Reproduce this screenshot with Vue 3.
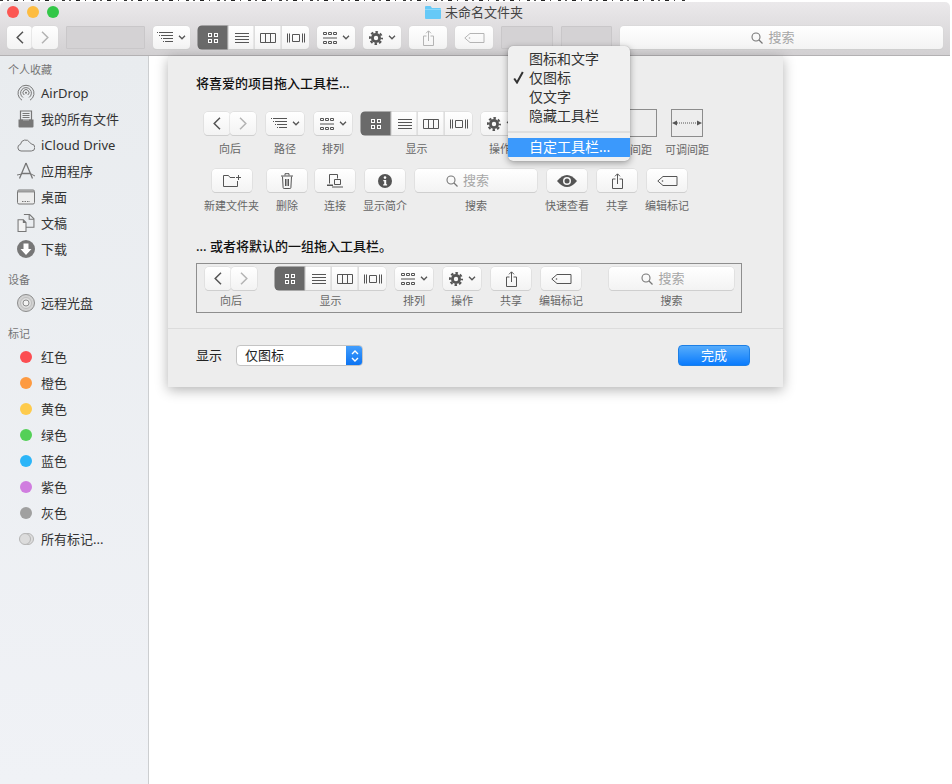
<script setup>
const I = (n, w, h) => ({ n, w, h })
const btn = (cls, ...icons) => ({ cls, icons })

const nav = (a, b) => ({
  cls: 'nav',
  segs: [btn(a, I('cl', 8, 13)), btn(b + ' off', I('cr', 8, 13))],
})
const view = () => ({
  cls: 'joined',
  segs: [
    btn('b30 on', I('grid', 10, 10)),
    btn('b26', I('lines', 14, 10)),
    btn('b27', I('cols', 16, 10)),
    btn('b28', I('cover', 18, 10)),
  ],
})
const single = (b, ...icons) => ({ cls: '', segs: [btn(b, ...icons)] })
const path = (b) => single(b, I('path', 16, 11), I('caret', 8, 5))
const arrange = (b) => single(b, I('arr', 14, 12), I('caret', 8, 5))
const action = (b) => single(b, I('gear', 14, 14), I('caret', 8, 5))
const share = (b = 'b40') => single(b, I('share', 11, 16))
const tag = (b = 'b40') => single(b, I('tag', 21, 10))
const search = (b) => ({
  cls: '',
  segs: [{ cls: b + ' search', icons: [I('search', 12, 12)], text: '搜索' }],
})

const toolbar = [
  nav('b25', 'b26'),
  single('ph b79'),
  path('b37'),
  view(),
  arrange('b38'),
  action('b38'),
  share('b38 off'),
  tag('b38 off'),
  single('ph b52'),
  single('ph b51'),
  search('b323'),
]

const rowOne = [
  { label: '向后', w: 'w52 mr1', ...nav('b26', 'b26') },
  { label: '路径', w: 'w40', ...path('b38') },
  { label: '排列', w: 'w40', ...arrange('b38') },
  { label: '显示', w: 'w111', ...view() },
  { label: '操作', w: 'w40', ...action('b38') },
  { label: '固定间距', w: 'w54 far', space: 'fixed' },
  { label: '可调间距', w: 'w44', space: 'flex' },
]
const rowTwo = [
  { label: '新建文件夹', w: 'w55', ...single('b40', I('newf', 18, 13)) },
  { label: '删除', w: 'w40', ...single('b40', I('trash', 12, 16)) },
  { label: '连接', w: 'w40', ...single('b40', I('conn', 16, 14)) },
  { label: '显示简介', w: 'w44', ...single('b40', I('info', 14, 14)) },
  { label: '搜索', w: 'w122', ...search('b122') },
  { label: '快速查看', w: 'w44', ...single('b40', I('eye', 20, 12)) },
  { label: '共享', w: 'w40', ...share() },
  { label: '编辑标记', w: 'w44', ...tag() },
]
const rowBox = [
  { label: '向后', w: 'w52 gap10', ...nav('b26', 'b26') },
  { label: '显示', w: 'w111', ...view() },
  { label: '排列', w: 'w40', ...arrange('b38') },
  { label: '操作', w: 'w40', ...action('b38') },
  { label: '共享', w: 'w40 ml1', ...share() },
  { label: '编辑标记', w: 'w44', ...tag() },
  { label: '搜索', w: 'w125 ml18', ...search('b125') },
]

const sections = [
  {
    title: '个人收藏',
    items: [
      { name: 'AirDrop', icon: 'airdrop', latin: true },
      { name: '我的所有文件', icon: 'files' },
      { name: 'iCloud Drive', icon: 'cloud', latin: true },
      { name: '应用程序', icon: 'apps' },
      { name: '桌面', icon: 'desk' },
      { name: '文稿', icon: 'docs' },
      { name: '下载', icon: 'down' },
    ],
  },
  { title: '设备', items: [{ name: '远程光盘', icon: 'disc' }] },
  {
    title: '标记',
    items: [
      { name: '红色', dot: '#fc4e52' },
      { name: '橙色', dot: '#fd9a41' },
      { name: '黄色', dot: '#fecb4c' },
      { name: '绿色', dot: '#54d057' },
      { name: '蓝色', dot: '#2bb5f8' },
      { name: '紫色', dot: '#d07ddf' },
      { name: '灰色', dot: '#a0a0a0' },
      { name: '所有标记...', all: true },
    ],
  },
]

const menuTop = ['图标和文字', '仅图标', '仅文字', '隐藏工具栏']
</script>

<template>
  <div class="page">
    <svg class="defs" width="0" height="0" aria-hidden="true">
      <symbol id="i-cl" viewBox="0 0 8 13"><path d="M7 .8 1.200 6.500 7 12.200" fill="none" stroke="currentColor" stroke-width="1.500"/></symbol>
      <symbol id="i-cr" viewBox="0 0 8 13"><path d="M1 .8 6.800 6.500 1 12.200" fill="none" stroke="currentColor" stroke-width="1.500"/></symbol>
      <symbol id="i-caret" viewBox="0 0 8 5"><path d="M1 .8 4 3.800 7 .8" fill="none" stroke="currentColor" stroke-width="1.300"/></symbol>
      <symbol id="i-path" viewBox="0 0 16 11"><path d="M3 .5h13M5 3.500h11M7 6.500h9M9 9.500h7" fill="none" stroke="currentColor"/><path d="M0 .5h3M2 3.500h3M4 6.500h3M6 9.500h3" fill="none" stroke="currentColor" stroke-dasharray="1 1"/></symbol>
      <symbol id="i-grid" viewBox="0 0 10 10"><g fill="none" stroke="currentColor"><rect x=".5" y=".5" width="3" height="3"/><rect x="6.500" y=".5" width="3" height="3"/><rect x=".5" y="6.500" width="3" height="3"/><rect x="6.500" y="6.500" width="3" height="3"/></g></symbol>
      <symbol id="i-lines" viewBox="0 0 14 10"><path d="M0 .5h14M0 3.500h14M0 6.500h14M0 9.500h14" stroke="currentColor"/></symbol>
      <symbol id="i-cols" viewBox="0 0 16 10"><path d="M.5.5h15v9H.5zM5.500.5v9M10.500.5v9" fill="none" stroke="currentColor"/></symbol>
      <symbol id="i-cover" viewBox="0 0 18 10"><path d="M.5.5v9M2.500.5v9M15.500.5v9M17.500.5v9M5.500 1.500h7v7h-7z" fill="none" stroke="currentColor"/></symbol>
      <symbol id="i-arr" viewBox="0 0 14 12"><g fill="none" stroke="currentColor"><path d="M.5.5h3v2h-3zM5.500.5h3v2h-3zM10.500.5h3v2h-3zM.5 9.500h3v2h-3zM5.500 9.500h3v2h-3zM10.500 9.500h3v2h-3zM0 6h14"/></g></symbol>
      <symbol id="i-gear" viewBox="0 0 14 14"><circle cx="7" cy="7" r="3.600" fill="none" stroke="currentColor" stroke-width="2.800"/><circle cx="7" cy="7" r="5.900" fill="none" stroke="currentColor" stroke-width="2.200" stroke-dasharray="2.500 2.130" stroke-dashoffset="1.250"/></symbol>
      <symbol id="i-share" viewBox="0 0 11 16"><path d="M3.500 6H.5v9.500h10V6h-3M5.500 11V1M3 3.300 5.500.8 8 3.300" fill="none" stroke="currentColor"/></symbol>
      <symbol id="i-tag" viewBox="0 0 21 10"><path d="M6 .5h14v9H6L.8 5z" fill="none" stroke="currentColor" stroke-linejoin="round"/><circle cx="5.500" cy="5" r=".8" fill="currentColor"/></symbol>
      <symbol id="i-search" viewBox="0 0 12 12"><circle cx="5" cy="5" r="4" fill="none" stroke="currentColor" stroke-width="1.100"/><path d="M8 8l3.500 3.500" stroke="currentColor" stroke-width="1.300"/></symbol>
      <symbol id="i-newf" viewBox="0 0 18 13"><path d="M12 3.500H7L5.500 1.500H.5v11h14V7M15.500 1v5M13 3.500h5" fill="none" stroke="currentColor"/></symbol>
      <symbol id="i-trash" viewBox="0 0 12 16"><path d="M1.500 3.500l.6 11a1 1 0 0 0 1 1h5.800a1 1 0 0 0 1-1l.6-11M0 3h12M4 2.500V.7h4v1.800M4.500 6v7M6 6v7M7.500 6v7" fill="none" stroke="currentColor"/></symbol>
      <symbol id="i-conn" viewBox="0 0 16 14"><path d="M2.500 9.500V.5h8v4M7.500 5.500h6v5h-6z" fill="none" stroke="currentColor"/><path d="M0 10.500h6V12H0zM5 12.500h11v1H5z" fill="currentColor"/></symbol>
      <symbol id="i-info" viewBox="0 0 14 14"><circle cx="7" cy="7" r="7" fill="currentColor"/><circle cx="7" cy="3.600" r="1.300" fill="#fff"/><path d="M5.300 6h2.900v4.300h.9v1.200H5.200v-1.200h1V7.200h-.9z" fill="#fff"/></symbol>
      <symbol id="i-eye" viewBox="0 0 20 12"><path d="M0 6Q10-6 20 6 10 18 0 6z" fill="currentColor"/><circle cx="10" cy="6" r="4" fill="#f6f6f6"/><circle cx="10" cy="6" r="2.500" fill="currentColor"/></symbol>
      <symbol id="i-airdrop" viewBox="0 0 18 18"><g fill="none" stroke="currentColor"><path d="M5 16.200A8 8 0 1 1 13 16.200"/><path d="M6 13.500A5.400 5.400 0 1 1 12 13.500"/><path d="M7.200 11A3 3 0 1 1 10.800 11"/></g><circle cx="9" cy="8.800" r="1" fill="currentColor"/></symbol>
      <symbol id="i-files" viewBox="0 0 18 18"><path d="M3.500 1h11v9h-11z" fill="none" stroke="currentColor" stroke-width="1.200"/><path d="M5.500 3.500h7M5.500 5.500h7M5.500 7.500h7" stroke="currentColor"/><path d="M1.500 9.500h4.500v1h6v-1h4.500v7a1 1 0 0 1-1 1h-13a1 1 0 0 1-1-1z" fill="currentColor"/></symbol>
      <symbol id="i-cloud" viewBox="0 0 18 14"><path d="M4 13a3.400 3.400 0 0 1-.5-6.700 5 5 0 0 1 9.300-1.800 3.300 3.300 0 0 1 1.500 1.500A3.500 3.500 0 0 1 14.300 13z" fill="none" stroke="currentColor"/></symbol>
      <symbol id="i-apps" viewBox="0 0 18 18"><path d="M9 1 2.500 16.500M9 1l6.500 15.500M4.500 11.500h9" fill="none" stroke="currentColor" stroke-width="1.300"/><path d="M0 13l5-1M18 14l-4-2" stroke="currentColor" stroke-width="1"/></symbol>
      <symbol id="i-desk" viewBox="0 0 18 15"><rect x=".5" y=".5" width="17" height="14" rx="1.500" fill="#ededed" stroke="currentColor"/><path d="M1 1h16v2H1z" fill="#9a9a9a"/><path d="M5 12h8" stroke="currentColor" stroke-dasharray="1.500 1"/></symbol>
      <symbol id="i-docs" viewBox="0 0 16 17"><path d="M.5 5.500h5l2.500 2.500v8.500H.5zM5.500 5.500V8H8" fill="#f3f3f3" stroke="currentColor"/><path d="M6 .5h5.500l4 4v8h-7.500" fill="none" stroke="currentColor"/><path d="M11 .5V5h4.500" fill="none" stroke="currentColor"/></symbol>
      <symbol id="i-down" viewBox="0 0 18 18"><circle cx="9" cy="9" r="9" fill="currentColor"/><path d="M6.500 3.500h5V9h3L9 15 3.500 9h3z" fill="#fff"/></symbol>
      <symbol id="i-disc" viewBox="0 0 18 18"><circle cx="9" cy="9" r="8.500" fill="#d2d2d2" stroke="#8c8c8c"/><circle cx="9" cy="9" r="5.500" fill="#dfdfdf" stroke="#bdbdbd"/><circle cx="9" cy="9" r="3" fill="#f2f2f2" stroke="#8c8c8c"/></symbol>
      <symbol id="i-folder" viewBox="0 0 16 14"><path d="M0 2a1 1 0 0 1 1-1h4.500L7 3h8a1 1 0 0 1 1 1v9a1 1 0 0 1-1 1H1a1 1 0 0 1-1-1z" fill="#66c9f7"/><path d="M0 4h16v1H0z" fill="#8ad8fa"/></symbol>
      <symbol id="i-flexsp" viewBox="0 0 30 6"><path d="M0 3l5-2.500v5zM30 3l-5-2.500v5z" fill="currentColor"/><path d="M5 3h20" stroke="currentColor" stroke-dasharray="1 1"/></symbol>
      <symbol id="i-check" viewBox="0 0 11 13"><path d="M1.200 7.500 4 11.500 9.800 1" fill="none" stroke="currentColor" stroke-width="2"/></symbol>
      <symbol id="i-updown" viewBox="0 0 8 14"><path d="M1 5 4 2l3 3M1 9l3 3 3-3" fill="none" stroke="currentColor" stroke-width="1.400"/></symbol>
    </svg>

    <div class="noise"></div>

    <div class="window">
      <header class="chrome">
        <div class="titlebar">
          <div class="lights">
            <span class="light red"></span>
            <span class="light amber"></span>
            <span class="light green"></span>
          </div>
          <svg width="16" height="14" class="folder"><use href="#i-folder" /></svg>
          <span class="title">未命名文件夹</span>
        </div>
        <div class="toolbar">
          <div v-for="(item, i) in toolbar" :key="i" class="ctl" :class="item.cls">
            <div v-for="(s, j) in item.segs" :key="j" class="btn" :class="s.cls">
              <svg v-for="(ic, k) in s.icons" :key="k" :width="ic.w" :height="ic.h"><use :href="'#i-' + ic.n" /></svg>
              <span v-if="s.text" class="stext">{{ s.text }}</span>
            </div>
          </div>
        </div>
      </header>

      <div class="body">
        <aside class="sidebar">
          <section v-for="sec in sections" :key="sec.title" class="sec">
            <h4 class="sec-title">{{ sec.title }}</h4>
            <div v-for="it in sec.items" :key="it.name" class="side-row">
              <span class="side-ic">
                <svg v-if="it.icon" width="18" height="18" class="side-svg"><use :href="'#i-' + it.icon" /></svg>
                <span v-else-if="it.dot" class="dot" :style="{ background: it.dot }"></span>
                <span v-else class="dots"><i></i><i></i></span>
              </span>
              <span class="side-name" :class="{ cjk: !it.latin }">{{ it.name }}</span>
            </div>
          </section>
        </aside>

        <main class="content">
          <div class="sheet">
            <h3 class="head">将喜爱的项目拖入工具栏...</h3>
            <div class="row r1">
              <div v-for="item in rowOne" :key="item.label" class="tool" :class="item.w">
                <div v-if="item.space" class="space" :class="item.space">
                  <svg v-if="item.space === 'flex'" width="30" height="6"><use href="#i-flexsp" /></svg>
                </div>
                <div v-else class="ctl" :class="item.cls">
                  <div v-for="(s, j) in item.segs" :key="j" class="btn" :class="s.cls">
                    <svg v-for="(ic, k) in s.icons" :key="k" :width="ic.w" :height="ic.h"><use :href="'#i-' + ic.n" /></svg>
                    <span v-if="s.text" class="stext">{{ s.text }}</span>
                  </div>
                </div>
                <span class="lab">{{ item.label }}</span>
              </div>
            </div>
            <div class="row r2">
              <div v-for="item in rowTwo" :key="item.label" class="tool" :class="item.w">
                <div class="ctl" :class="item.cls">
                  <div v-for="(s, j) in item.segs" :key="j" class="btn" :class="s.cls">
                    <svg v-for="(ic, k) in s.icons" :key="k" :width="ic.w" :height="ic.h"><use :href="'#i-' + ic.n" /></svg>
                    <span v-if="s.text" class="stext">{{ s.text }}</span>
                  </div>
                </div>
                <span class="lab">{{ item.label }}</span>
              </div>
            </div>

            <h3 class="head second">... 或者将默认的一组拖入工具栏。</h3>
            <div class="box">
              <div v-for="item in rowBox" :key="item.label" class="tool" :class="item.w">
                <div class="ctl" :class="item.cls">
                  <div v-for="(s, j) in item.segs" :key="j" class="btn" :class="s.cls">
                    <svg v-for="(ic, k) in s.icons" :key="k" :width="ic.w" :height="ic.h"><use :href="'#i-' + ic.n" /></svg>
                    <span v-if="s.text" class="stext">{{ s.text }}</span>
                  </div>
                </div>
                <span class="lab tight">{{ item.label }}</span>
              </div>
            </div>

            <div class="foot">
              <span class="foot-label">显示</span>
              <div class="select">
                <span class="select-text">仅图标</span>
                <span class="stepper"><svg width="8" height="14"><use href="#i-updown" /></svg></span>
              </div>
              <button class="done">完成</button>
            </div>
          </div>
        </main>
      </div>
    </div>

    <div class="menu">
      <div v-for="(m, i) in menuTop" :key="m" class="mi">
        <svg v-if="i === 1" class="check" width="11" height="13"><use href="#i-check" /></svg>
        {{ m }}
      </div>
      <div class="msep"></div>
      <div class="mi hi">自定工具栏...</div>
    </div>
  </div>
</template>

<style scoped>
* { box-sizing: border-box; }
.defs { position: absolute; }
.page {
  position: relative;
  width: 952px;
  height: 784px;
  overflow: hidden;
  background: #fff;
  font-family: "Noto Sans", "Noto Sans CJK SC", sans-serif;
  color: #333;
}
.noise {
  width: 685px;
  height: 2px;
  background: linear-gradient(90deg, #333 0 3px, transparent 3px 7px, #555 7px 9px, transparent 9px 14px, #222 14px 18px, transparent 18px 23px, #444 23px 24px, transparent 24px 31px) 0 0 / 31px 1px repeat-x;
}
.window {
  width: 950px;
  height: 782px;
  display: flex;
  flex-direction: column;
  border-radius: 5px 5px 0 0;
  overflow: hidden;
}
.chrome {
  background: linear-gradient(#ebe9eb, #d2d0d2);
  border-bottom: 1px solid #b3b1b3;
  height: 54px;
  flex: none;
}
.titlebar {
  height: 20px;
  padding-right: 2px;
  position: relative;
  display: flex;
  align-items: center;
  justify-content: center;
}
.lights { position: absolute; left: 7px; top: 4px; display: flex; gap: 8px; }
.light { width: 12px; height: 12px; border-radius: 50%; }
.red { background: #fc5753; }
.amber { background: #fdbc40; }
.green { background: #33c748; }
.folder { margin-right: 4px; }
.title { font-size: 13px; line-height: 20px; color: #444; }

.toolbar { display: flex; gap: 8px; padding: 4px 0 0 7px; }
.ctl { display: flex; }
.btn {
  height: 23px;
  display: flex;
  align-items: center;
  justify-content: center;
  gap: 5px;
  color: #555;
  background: linear-gradient(#fff, #f3f3f3);
  border-radius: 4px;
  box-shadow: 0 0 0 .5px #d5d5d5, 0 1px 0 #c9c9c9;
}
.off { color: #b4b4b4; }
.ph {
  background: #d4d2d4;
  border: 1px solid #c9c7c9;
  box-shadow: none;
  border-radius: 1px;
}
.on { background: #6a6a6a; color: #fff; box-shadow: 0 0 0 .5px #666; }
.nav { gap: 0; }
.joined .btn { border-radius: 0; border-left: 1px solid #dedede; }
.joined .btn:first-child { border-radius: 4px 0 0 4px; border-left: none; }
.joined .btn:last-child { border-radius: 0 4px 4px 0; }
.b25 { width: 25px; }
.b26 { width: 26px; }
.b27 { width: 27px; }
.b28 { width: 28px; }
.b30 { width: 30px; }
.b37 { width: 37px; }
.b38 { width: 38px; }
.b40 { width: 40px; }
.b51 { width: 51px; }
.b52 { width: 52px; }
.b79 { width: 79px; }
.b122 { width: 122px; }
.b125 { width: 125px; }
.b323 { width: 323px; }
.search { color: #777; padding-right: 17px; }
.stext { font-size: 13px; color: #a6a6a6; line-height: 1; }

.body { flex: 1; display: flex; min-height: 0; }
.sidebar {
  width: 149px;
  flex: none;
  padding-top: 7px;
  background: linear-gradient(#e9ecef, #f0f2f6);
  border-right: 1px solid #ccced0;
}
.sec { margin-bottom: 11px; }
.sec-title { margin: 0 0 3px 8px; font-size: 11px; line-height: 14px; font-weight: 400; color: #757575; }
.side-row { height: 26px; display: flex; align-items: center; padding-left: 17px; gap: 6px; }
.side-ic { width: 18px; height: 18px; display: flex; align-items: center; justify-content: center; }
.side-svg { color: #777; }
.side-name { font-size: 13px; color: #333; white-space: nowrap; }
.cjk { margin-bottom: 2px; }
.dot { width: 12px; height: 12px; border-radius: 50%; }
.dots { position: relative; width: 15px; height: 12px; flex: none; }
.dots i { position: absolute; top: 0; width: 12px; height: 12px; border-radius: 50%; background: #dcdcdc; border: 1px solid #b5b5b5; }
.dots i:first-child { left: 3px; }
.dots i:last-child { left: 0; }

.content { flex: 1; background: #fff; }
.sheet {
  width: 615px;
  height: 331px;
  margin-left: 19px;
  padding-top: 18px;
  background: #ededed;
  box-shadow: 0 3px 12px rgba(0, 0, 0, .3);
  display: flex;
  flex-direction: column;
}
.head { margin: 0 0 0 28px; font-size: 13px; line-height: 18px; font-weight: 500; color: #111; }
.second { margin-top: 25px; }
.row { display: flex; gap: 8px; padding-left: 36px; }
.r1 { margin-top: 20px; }
.r2 { margin-top: 13px; }
.tool { display: flex; flex-direction: column; align-items: center; flex: none; }
.lab { margin-top: 7px; font-size: 11px; line-height: 13px; color: #666; white-space: nowrap; }
.tight { margin-top: 4px; }
.w40 { width: 40px; }
.w44 { width: 44px; }
.w52 { width: 52px; }
.w54 { width: 54px; }
.w55 { width: 55px; }
.w111 { width: 111px; }
.w122 { width: 122px; }
.w125 { width: 125px; }
.far { margin-left: 75px; }
.gap10 { margin-right: 10px; }
.mr1 { margin-right: 1px; }
.ml1 { margin-left: 1px; }
.ml18 { margin-left: 18px; }
.space {
  border: 1px solid #8c8c8c;
  height: 28px;
  margin: -3px 0 0;
  display: flex;
  align-items: center;
  justify-content: center;
  color: #555;
}
.fixed { width: 54px; }
.flex { width: 32px; }
.space + .lab { margin-top: 6px; }
.box {
  margin: 8px 0 0 28px;
  width: 546px;
  height: 50px;
  padding: 3px 0 0 8px;
  border: 1px solid #8e8e8e;
  display: flex;
  gap: 8px;
}
.foot {
  margin-top: 15px;
  border-top: 1px solid #dcdcdc;
  padding: 16px 33px 0 28px;
  display: flex;
  align-items: flex-start;
}
.foot-label { font-size: 13px; line-height: 21px; color: #222; margin-right: 14px; }
.select {
  width: 127px;
  height: 21px;
  display: flex;
  justify-content: space-between;
  background: #fff;
  border: 1px solid #c4c4c4;
  border-radius: 4px;
  overflow: hidden;
}
.select-text { font-size: 13px; line-height: 18px; padding-left: 8px; color: #222; }
.stepper {
  width: 17px;
  margin: -1px;
  display: flex;
  align-items: center;
  justify-content: center;
  color: #fff;
  background: linear-gradient(#45a0fd, #0a72f2);
}
.done {
  margin-left: auto;
  width: 72px;
  height: 21px;
  padding: 0;
  border: 1px solid #1c7fe6;
  border-radius: 4px;
  background: linear-gradient(#56acfb, #0a7bfd);
  color: #fff;
  font-family: inherit;
  font-size: 13px;
  line-height: 19px;
}

.menu {
  position: absolute;
  left: 508px;
  top: 46px;
  width: 122px;
  height: 115px;
  padding-top: 4px;
  background: #f0f0f0;
  border-radius: 5px;
  box-shadow: 0 2px 7px rgba(0, 0, 0, .35), 0 0 1px rgba(0, 0, 0, .3);
  overflow: hidden;
}
.mi {
  position: relative;
  height: 19px;
  padding-left: 21px;
  font-size: 14px;
  line-height: 17px;
  color: #333;
  white-space: nowrap;
}
.check { position: absolute; left: 5px; top: 2px; color: #333; }
.msep { height: 2px; margin: 5px 0; background: #dfdfdf; }
.hi { background: #3b99fc; color: #fff; }
</style>
